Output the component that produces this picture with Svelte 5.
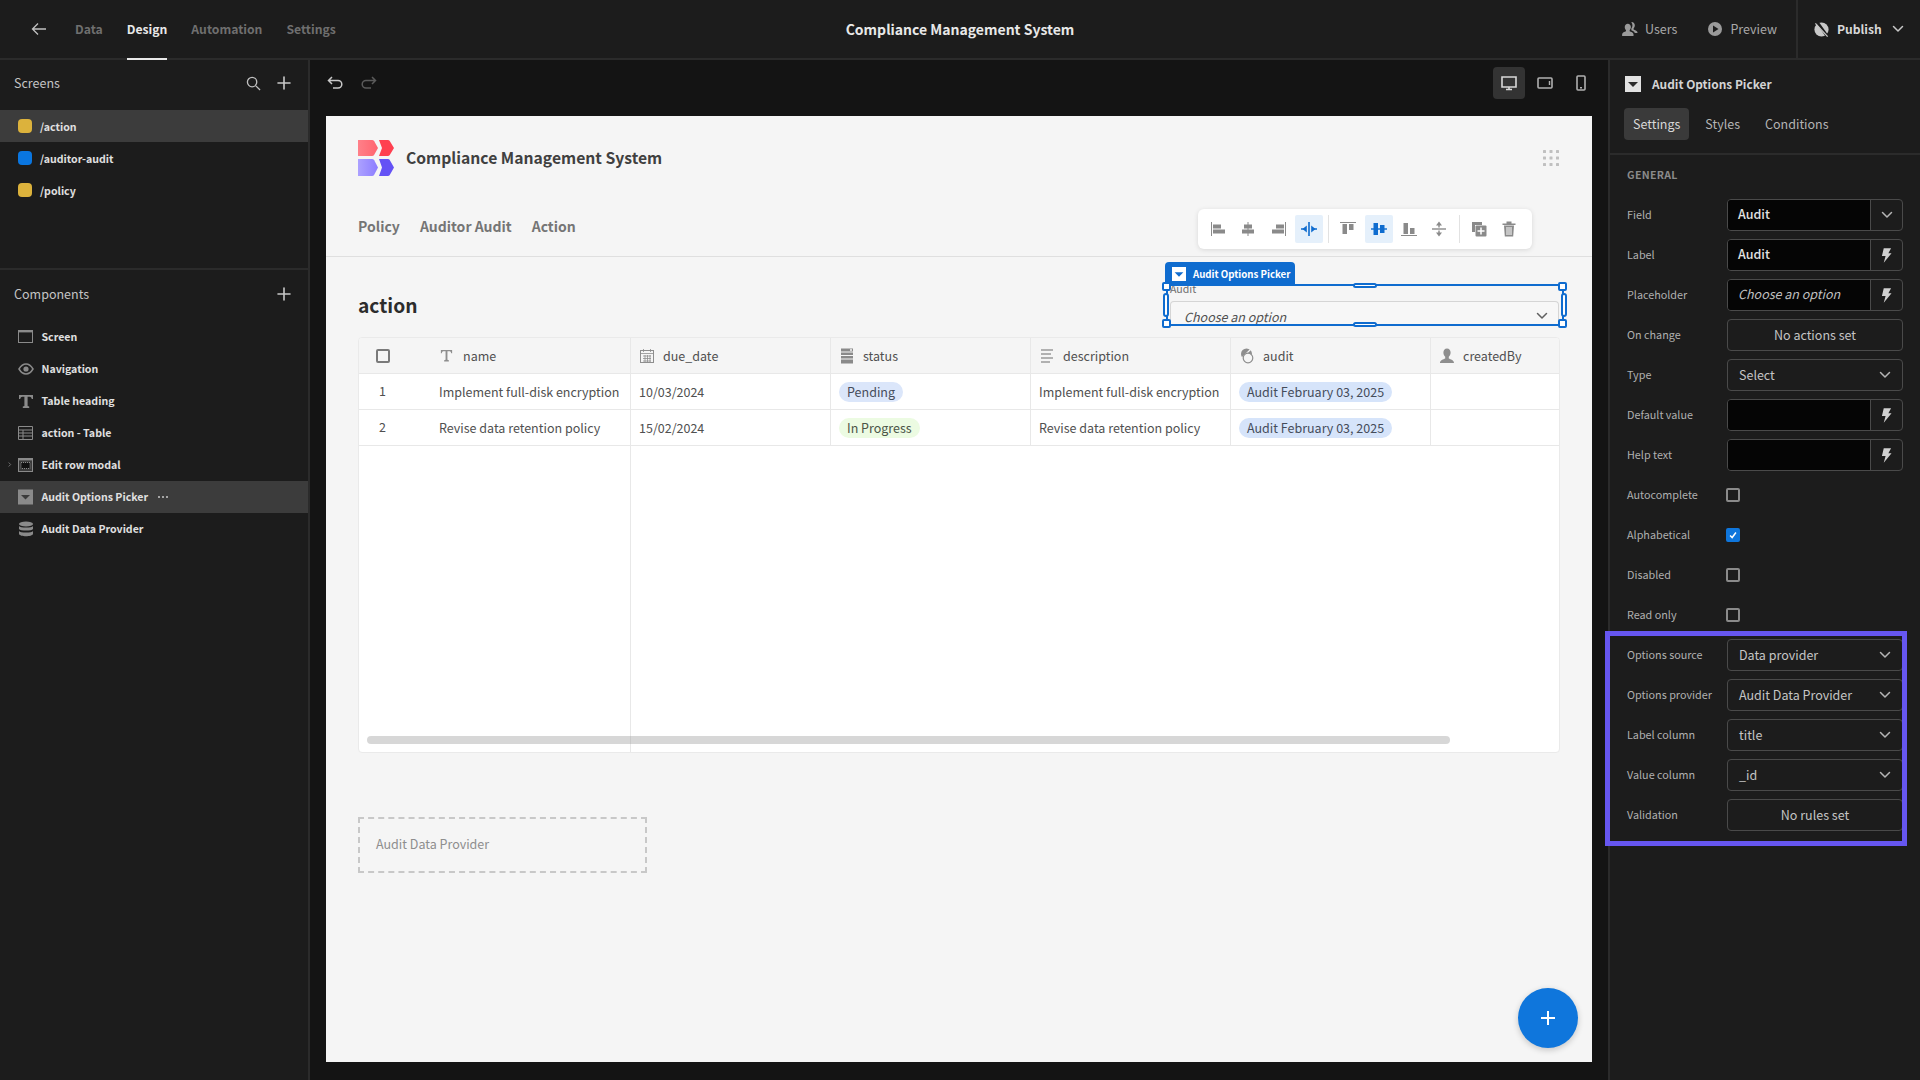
<script>
  const tabs = ['Data', 'Design', 'Automation', 'Settings'];
  const screens = [
    { name: '/action', color: 'yellow', active: true },
    { name: '/auditor-audit', color: 'blue' },
    { name: '/policy', color: 'yellow' }
  ];
  const comps = [
    { name: 'Screen', icon: 'screen' },
    { name: 'Navigation', icon: 'eye' },
    { name: 'Table heading', icon: 'text' },
    { name: 'action - Table', icon: 'table' },
    { name: 'Edit row modal', icon: 'modal', caret: true },
    { name: 'Audit Options Picker', icon: 'picker', active: true },
    { name: 'Audit Data Provider', icon: 'db' }
  ];
  const cols = [
    { name: 'due_date', icon: 'cal' },
    { name: 'status', icon: 'list' },
    { name: 'description', icon: 'lines' },
    { name: 'audit', icon: 'rel' },
    { name: 'createdBy', icon: 'user' }
  ];
  const rows = [
    { n: 1, name: 'Implement full-disk encryption', date: '10/03/2024', status: 'Pending', st: 'pend' },
    { n: 2, name: 'Revise data retention policy', date: '15/02/2024', status: 'In Progress', st: 'prog' }
  ];
  const upper = [
    { l: 'Field', t: 'combo', v: 'Audit', b: 'chev' },
    { l: 'Label', t: 'combo', v: 'Audit', b: 'bolt' },
    { l: 'Placeholder', t: 'combo', v: 'Choose an option', b: 'bolt', it: true },
    { l: 'On change', t: 'btn', v: 'No actions set' },
    { l: 'Type', t: 'sel', v: 'Select' },
    { l: 'Default value', t: 'combo', v: '', b: 'bolt' },
    { l: 'Help text', t: 'combo', v: '', b: 'bolt' },
    { l: 'Autocomplete', t: 'chk' },
    { l: 'Alphabetical', t: 'chk', on: true },
    { l: 'Disabled', t: 'chk' },
    { l: 'Read only', t: 'chk' },
    { l: 'Options source', t: 'sel', v: 'Data provider' },
    { l: 'Options provider', t: 'sel', v: 'Audit Data Provider' },
    { l: 'Label column', t: 'sel', v: 'title' },
    { l: 'Value column', t: 'sel', v: '_id' },
    { l: 'Validation', t: 'btn', v: 'No rules set' }
  ];
</script>

{#snippet chevron(cls)}
  <svg class={cls} viewBox="0 0 12 8" width="12" height="8"><path d="M1.5 1.5 6 6l4.5-4.5" fill="none" stroke="currentColor" stroke-width="1.5" stroke-linecap="round" stroke-linejoin="round"/></svg>
{/snippet}

{#snippet bolt()}
  <svg viewBox="0 0 12 16" width="11" height="15"><path d="M3 0h8L8 5.5h3.5L3 16l2-7.5H1z" fill="#d0d0d0"/></svg>
{/snippet}

{#snippet plus()}
  <svg viewBox="0 0 14 14" width="14" height="14"><path d="M7 1v12M1 7h12" stroke="#c8c8c8" stroke-width="1.6" stroke-linecap="round"/></svg>
{/snippet}

{#snippet pickerIcon(bg, fg)}
  <svg viewBox="0 0 16 16" width="16" height="16"><rect width="16" height="16" fill={bg}/><path d="M3 6h10l-5 5z" fill={fg}/></svg>
{/snippet}

{#snippet compIcon(k)}
  <svg viewBox="0 0 16 16" width="16" height="16" class="ci">
    {#if k === 'screen'}
      <rect x=".5" y="1.5" width="14" height="12" fill="none" stroke="#8a8a8a"/><rect x="0" y="1" width="15" height="2.4" fill="#8a8a8a"/>
    {:else if k === 'eye'}
      <path d="M1 8c2-3.4 4.4-5 7-5s5 1.600 7 5c-2 3.400-4.400 5-7 5s-5-1.600-7-5z" fill="none" stroke="#8a8a8a" stroke-width="1.500"/><circle cx="8" cy="8" r="2.600" fill="#8a8a8a"/>
    {:else if k === 'text'}
      <path d="M1 2h14v4h-1.200c-.4-1.600-1-2.300-2.400-2.300H9.600v9.200l1.600.6V15H4.800v-1.500l1.600-.6V3.700H4.600C3.200 3.700 2.600 4.400 2.200 6H1z" fill="#8a8a8a"/>
    {:else if k === 'table'}
      <path d="M.5 1.500h14v13H.5zM.5 5h14M.5 8h14M.5 11h14M5 5v9.500" fill="none" stroke="#8a8a8a"/>
    {:else if k === 'modal'}
      <rect x=".5" y="1.500" width="14" height="13" fill="#3a3a3a" stroke="#8a8a8a"/><rect x="0" y="1" width="15" height="2.400" fill="#8a8a8a"/><rect x="3" y="5.500" width="9" height="6" fill="#111" stroke="#8a8a8a" stroke-dasharray="1 1"/>
    {:else if k === 'picker'}
      <rect width="15" height="15" y=".5" fill="#8a8a8a"/><path d="M3 6h9l-4.500 4.500z" fill="#3b3b3b"/>
    {:else}
      <ellipse cx="8" cy="3" rx="7" ry="2.600" fill="#8a8a8a"/><path d="M1 5c1 2 13 2 14 0v3c-1 2-13 2-14 0zM1 10c1 2 13 2 14 0v3c-1 3-13 3-14 0z" fill="#8a8a8a"/>
    {/if}
  </svg>
{/snippet}

{#snippet colIcon(k)}
  <svg viewBox="0 0 16 16" width="16" height="16" class="ci">
    {#if k === 'cal'}
      <rect x="1.500" y="2.500" width="13" height="12" fill="none" stroke="#8e8e8e"/><path d="M1.500 5.500h13M4.500 1v3M11.500 1v3M4 8h8M4 10.500h8M4 13h8M6 7v7M8.500 7v7M11 7v7" stroke="#8e8e8e" stroke-width=".8"/>
    {:else if k === 'list'}
      <path d="M2 .5h12v15H2z" fill="#8a8a8a"/><path d="M2 4h12M2 7.500h12M2 11h12" stroke="#f5f5f5" stroke-width="1"/><path d="M11 1.200h2v1.500h-2z" fill="#f5f5f5"/>
    {:else if k === 'lines'}
      <path d="M2 2h12M2 6h10M2 10h12M2 14h9" stroke="#9a9a9a" stroke-width="1.500"/>
    {:else if k === 'rel'}
      <circle cx="7.500" cy="6" r="5.500" fill="#8e8e8e"/><path d="M12 1 3 10" stroke="#f5f5f5" stroke-width="1.200"/><circle cx="9" cy="10" r="4.800" fill="#f5f5f5" stroke="#8e8e8e" stroke-width="1.200"/>
    {:else}
      <path d="M8 .5c2.300 0 3.600 1.700 3.600 4 0 2-.9 3.500-1.800 4.300v1.700c1.800.9 5.200 1.600 5.200 4.500H1c0-2.900 3.400-3.600 5.200-4.500V8.800C5.300 8 4.400 6.500 4.400 4.500c0-2.300 1.300-4 3.600-4z" fill="#8e8e8e"/>
    {/if}
  </svg>
{/snippet}

<div class="app">
  <header class="top">
    <div class="top-left">
      <svg class="back" viewBox="0 0 16 14" width="16" height="14"><path d="M15 7H1.500M7 1.500 1.500 7 7 12.500" fill="none" stroke="#c0c0c0" stroke-width="1.300"/></svg>
      <nav class="tabs">
        {#each tabs as t}
          <span class="tab" class:on={t === 'Design'}>{t}</span>
        {/each}
      </nav>
    </div>
    <div class="app-title">Compliance Management System</div>
    <div class="top-right">
      <span class="act user">
        <svg viewBox="0 0 18 16" width="16" height="14"><path d="M11 0c2 0 3.500 1.500 3.500 3.800 0 1.500-.6 2.700-1.400 3.500v1.200c1.400.7 3.900 1.200 4.400 3v1h-3c-.6-1.600-2.400-2.400-4-3.100v-2c.9-1 1.300-2.300 1.300-3.600 0-1.100-.3-2-.8-2.800C10.400.2 10.700 0 11 0z" fill="#9a9a9a"/><path d="M6.500 2C8.500 2 10 3.500 10 5.800c0 1.500-.6 2.700-1.400 3.500v1.200c1.600.8 4.400 1.400 4.400 3.500v2H0v-2c0-2.100 2.800-2.700 4.400-3.500V9.300C3.600 8.500 3 7.300 3 5.800 3 3.500 4.500 2 6.500 2z" fill="#9a9a9a"/></svg>
        Users
      </span>
      <span class="act prev">
        <svg viewBox="0 0 14 14" width="14" height="14"><circle cx="7" cy="7" r="7" fill="#9a9a9a"/><path d="M5 3.500 10.500 7 5 10.500z" fill="#1c1c1c"/></svg>
        Preview
      </span>
      <div class="pub">
        <svg viewBox="0 0 18 18" width="17" height="17"><circle cx="9" cy="9" r="7.500" fill="#c8c8c8"/><path d="M5 2 15 16" stroke="#1c1c1c" stroke-width="3"/><path d="M2.500 2.500 15.500 16.500" stroke="#c8c8c8" stroke-width="1.400"/></svg>
        <span class="pub-t">Publish</span>
        {@render chevron('pub-c')}
      </div>
    </div>
  </header>

  <div class="main">
    <aside class="left">
      <section class="screens">
        <div class="ph">
          <span>Screens</span>
          <span class="ph-ic">
            <svg viewBox="0 0 16 16" width="15" height="15"><circle cx="6.500" cy="6.500" r="5" fill="none" stroke="#c0c0c0" stroke-width="1.400"/><path d="m10.500 10.500 4.500 4.500" stroke="#c0c0c0" stroke-width="1.400"/></svg>
            {@render plus()}
          </span>
        </div>
        {#each screens as s}
          <div class="item" class:active={s.active}>
            <i class="dot {s.color}"></i><span class="s-name">{s.name}</span>
          </div>
        {/each}
      </section>
      <section class="comps">
        <div class="ph"><span>Components</span><span class="ph-ic">{@render plus()}</span></div>
        {#each comps as c}
          <div class="item c" class:active={c.active}>
            {#if c.caret}<svg class="caret" viewBox="0 0 6 8" width="4" height="7"><path d="m1 1 3 3-3 3" fill="none" stroke="#999"/></svg>{/if}
            {@render compIcon(c.icon)}
            <span>{c.name}</span>
            {#if c.active}<svg class="more" viewBox="0 0 10 2" width="10" height="2" fill="#c8c8c8"><circle cx="1" cy="1" r="1"/><circle cx="5" cy="1" r="1"/><circle cx="9" cy="1" r="1"/></svg>{/if}
          </div>
        {/each}
      </section>
    </aside>

    <main class="canvas">
      <div class="bar">
        <div class="undo">
          <svg viewBox="0 0 16 14" width="16" height="14"><path d="M5 1 1.500 4.500 5 8M1.500 4.500H11a3.800 3.800 0 0 1 0 7.600H6" fill="none" stroke="#c8c8c8" stroke-width="1.500"/></svg>
          <svg viewBox="0 0 16 14" width="16" height="14"><path d="M11 1l3.500 3.500L11 8M14.500 4.500H5a3.800 3.800 0 0 0 0 7.600h5" fill="none" stroke="#5a5a5a" stroke-width="1.500"/></svg>
        </div>
        <div class="devices">
          <span class="dev on"><svg viewBox="0 0 16 16" width="16" height="16"><path d="M1 2h14v10H1z" fill="none" stroke="#d8d8d8" stroke-width="1.600"/><path d="M5 14.500h6M8 12v2.500" stroke="#d8d8d8" stroke-width="1.600"/></svg></span>
          <span class="dev"><svg viewBox="0 0 16 16" width="16" height="16"><rect x="1" y="3" width="14" height="10" rx="1" fill="none" stroke="#b0b0b0" stroke-width="1.600"/><path d="M12.500 6v4" stroke="#b0b0b0" stroke-width="1.400"/></svg></span>
          <span class="dev"><svg viewBox="0 0 16 16" width="16" height="16"><rect x="4" y="1" width="8" height="14" rx="1" fill="none" stroke="#b0b0b0" stroke-width="1.600"/><path d="M7 12.800h2" stroke="#b0b0b0" stroke-width="1.400"/></svg></span>
        </div>
      </div>

      <div class="preview">
        <div class="p-head">
          <div class="brand">
            <svg viewBox="0 0 36 36" width="36" height="36">
              <defs>
                <linearGradient id="ga" x1="0" x2="1"><stop offset="0" stop-color="#ff8089"/><stop offset="1" stop-color="#ff646f"/></linearGradient>
                <linearGradient id="gb" x1="0" x2="1"><stop offset="0" stop-color="#aca1ff"/><stop offset="1" stop-color="#8c7dff"/></linearGradient>
              </defs>
              <path d="M0 0h14q1.500 0 2.200 1.200L20 8l-3.800 6.800q-.7 1.200-2.200 1.200H0z" fill="url(#ga)"/>
              <path d="M21 0h9q1 0 1.600.8L36 8l-4.400 7.200q-.6.8-1.600.8h-9l3-8z" fill="#ff4050"/>
              <path d="M0 19h14q1.500 0 2.200 1.200L20 27.500l-3.800 7.300q-.7 1.200-2.200 1.200H0z" fill="url(#gb)"/>
              <path d="M21 19h9q1 0 1.600.8L36 27.500l-4.400 7.700q-.6.800-1.600.8h-9l3-8.500z" fill="#6452f5"/>
            </svg>
            <span class="brand-t">Compliance Management System</span>
            <svg class="grid-ic" viewBox="0 0 16 16" width="16" height="16" fill="#c0c0c0">
              {#each [1.500, 8, 14.500] as y}{#each [1.500, 8, 14.500] as x}<rect x={x - 1.500} y={y - 1.500} width="3" height="3" rx=".5"/>{/each}{/each}
            </svg>
          </div>
          <nav class="p-nav"><span>Policy</span><span>Auditor Audit</span><span>Action</span></nav>
        </div>

        <div class="p-body">
          <div class="title-row">
            <h1>action</h1>
            <div class="field">
              <div class="floater">
                {#each ['al','ac','ar','as'] as k}
                  <span class="fb" class:picked={k === 'as'}>
                    <svg viewBox="0 0 18 18" width="18" height="18">
                      {#if k === 'al'}<path d="M2.500 2v14" stroke="#8a8a8a"/><path d="M4 4.500h8V8.500H4zM4 9.500h12v4H4z" fill="#8a8a8a"/>
                      {:else if k === 'ac'}<path d="M9 2v14" stroke="#8a8a8a"/><path d="M5 4.500h8V8.500H5zM3 9.500h12v4H3z" fill="#8a8a8a"/>
                      {:else if k === 'ar'}<path d="M15.500 2v14" stroke="#8a8a8a"/><path d="M6 4.500h8V8.500H6zM2 9.500h12v4H2z" fill="#8a8a8a"/>
                      {:else}<path d="M9 2v14" stroke="#0f6ccf" stroke-width="1.600"/><path d="M1 9h5M17 9h-5" stroke="#0f6ccf" stroke-width="1.400"/><path d="M6.800 5.500v7L2.500 9zM11.200 5.500v7L15.500 9z" fill="#0f6ccf"/>{/if}
                    </svg>
                  </span>
                {/each}
                <i class="sep"></i>
                {#each ['vt','vc','vb','vs'] as k}
                  <span class="fb" class:picked={k === 'vc'}>
                    <svg viewBox="0 0 18 18" width="18" height="18">
                      {#if k === 'vt'}<path d="M1 2.500h16" stroke="#8a8a8a"/><path d="M3.500 4H8v10H3.500zM10 4h4.500v6H10z" fill="#8a8a8a"/>
                      {:else if k === 'vc'}<path d="M1 9h16" stroke="#0f6ccf" stroke-width="1.400"/><path d="M3.500 3H8v12H3.500zM10 5h4.500v8H10z" fill="#0f6ccf"/>
                      {:else if k === 'vb'}<path d="M1 15.500h16" stroke="#8a8a8a"/><path d="M3.500 3H8v11H3.500zM10 8h4.500v6H10z" fill="#8a8a8a"/>
                      {:else}<path d="M2 9h14" stroke="#8a8a8a" stroke-width="1.400"/><path d="M9 1.500 6 5.500h6zM9 16.500l-3-4h6z" fill="#8a8a8a"/><path d="M9 5v2.500M9 10.500V13" stroke="#8a8a8a" stroke-width="1.400"/>{/if}
                    </svg>
                  </span>
                {/each}
                <i class="sep"></i>
                <span class="fb"><svg viewBox="0 0 18 18" width="18" height="18"><path d="M2 2h10v3H5v7H2z" fill="#8a8a8a"/><rect x="5.500" y="5.500" width="11" height="11" rx="1" fill="#8a8a8a"/><path d="M11 7.500v7M7.500 11h7" stroke="#fff" stroke-width="1.500"/></svg></span>
                <span class="fb"><svg viewBox="0 0 18 18" width="18" height="18"><path d="M2.500 3.500h13v1.500h-13zM6.500 1.500h5v2h-5zM4 5.500h10l-.8 11H4.800z" fill="#8a8a8a"/><path d="M7 7v8M9 7v8M11 7v8" stroke="#fff"/></svg></span>
              </div>
              <div class="tag">{@render pickerIcon('#fff', '#0f6ccf')}<span>Audit Options Picker</span></div>
              <div class="f-label">Audit</div>
              <div class="f-input"><em>Choose an option</em>{@render chevron('f-c')}</div>
              <div class="sel-box">
                <i class="h c1"></i><i class="h c2"></i><i class="h c3"></i><i class="h c4"></i>
                <i class="h pt"></i><i class="h pb"></i><i class="h pl"></i><i class="h pr"></i>
              </div>
            </div>
          </div>

          <div class="table">
            <div class="tr th">
              <div class="sticky"><span class="idx"><i class="box"></i></span><span class="nm hd"><svg viewBox="0 0 16 16" width="15" height="15"><path d="M2 2h12v3.500h-1c-.3-1.300-.8-2-2-2H9v9l1.500.6V14.500h-5v-1.400L7 12.500v-9H5c-1.200 0-1.700.7-2 2H2z" fill="#8e8e8e"/></svg><span>name</span></span></div>
              {#each cols as c}
                <div class="cell hd">{@render colIcon(c.icon)}<span>{c.name}</span></div>
              {/each}
            </div>
            {#each rows as r}
              <div class="tr">
                <div class="sticky"><span class="idx n">{r.n}</span><span class="nm">{r.name}</span></div>
                <div class="cell">{r.date}</div>
                <div class="cell"><span class="pill {r.st}">{r.status}</span></div>
                <div class="cell">{r.name}</div>
                <div class="cell"><span class="pill aud">Audit February 03, 2025</span></div>
                <div class="cell"></div>
              </div>
            {/each}
            <div class="fill"><div class="fill-l"></div></div>
            <div class="scroll"></div>
          </div>

          <div class="dp">Audit Data Provider</div>
        </div>

        <div class="fab"><svg viewBox="0 0 18 18" width="18" height="18"><path d="M9 2v14M2 9h14" stroke="#fff" stroke-width="2"/></svg></div>
      </div>
    </main>

    <aside class="right">
      <div class="r-head">
        {@render pickerIcon('#e2e2e2', '#2a2a2a')}
        <span>Audit Options Picker</span>
      </div>
      <div class="r-tabs"><span class="on">Settings</span><span>Styles</span><span>Conditions</span></div>
      <div class="r-body">
        <div class="general">GENERAL</div>
        {#each upper as f}
          <div class="row">
            <label>{f.l}</label>
            {#if f.t === 'combo'}
              <div class="combo">
                <div class="ci-v" class:it={f.it}>{f.v}</div>
                <div class="ci-b">{#if f.b === 'bolt'}{@render bolt()}{:else}{@render chevron('c-c')}{/if}</div>
              </div>
            {:else if f.t === 'btn'}
              <div class="rbtn">{f.v}</div>
            {:else if f.t === 'sel'}
              <div class="sel"><span>{f.v}</span>{@render chevron('c-c')}</div>
            {:else}
              <div class="chk-w"><i class="chk" class:on={f.on}>{#if f.on}<svg viewBox="0 0 12 12" width="12" height="12"><path d="m2.500 6.500 2.500 2.500 4.500-6" fill="none" stroke="#fff" stroke-width="1.800"/></svg>{/if}</i></div>
            {/if}
          </div>
        {/each}
        <div class="hl"></div>
      </div>
    </aside>
  </div>
</div>

<style>
  :global(body) { margin: 0; background: #141414; }
  .app { width: 1920px; height: 1080px; overflow: hidden; display: flex; flex-direction: column; background: #141414; color: #d0d0d0; font-family: "Noto Sans CJK SC", "Noto Sans", sans-serif; font-size: 12.5px; line-height: 18px; }
  .top { height: 58px; flex: none; display: flex; align-items: stretch; justify-content: space-between; background: #1c1c1c; border-bottom: 2px solid #2b2b2b; position: relative; }
  .top-left { display: flex; align-items: center; padding-left: 31px; }
  .back { margin-right: 28px; }
  .tabs { display: flex; gap: 24px; align-self: stretch; }
  .tab { display: flex; align-items: center; font-size: 12.2px; font-weight: 600; color: #6f6f6f; height: 58px; box-sizing: border-box; }
  .tab.on { color: #e8e8e8; box-shadow: 0 2px 0 #e8e8e8; }
  .app-title { position: absolute; left: 0; right: 0; top: 0; height: 58px; display: flex; align-items: center; justify-content: center; font-size: 14px; font-weight: 600; color: #e8e8e8; }
  .top-right { display: flex; align-items: center; z-index: 1; }
  .act { display: flex; align-items: center; gap: 8px; color: #a8a8a8; }
  .act.user { margin-right: 31px; gap: 7px; }
  .act.prev { gap: 8px; margin-right: 19px; }
  .pub { display: flex; align-items: center; align-self: stretch; width: 124px; box-sizing: border-box; border-left: 2px solid #2b2b2b; padding-left: 15px; gap: 7px; }
  .pub-t { font-weight: 600; font-size: 12.1px; color: #d8d8d8; }
  .pub :global(.pub-c) { color: #c8c8c8; margin-left: 3px; }

  .main { flex: 1; display: flex; min-height: 0; }
  .left { width: 308px; flex: none; background: #1c1c1c; border-right: 2px solid #2b2b2b; display: flex; flex-direction: column; }
  .screens { height: 210px; flex: none; box-sizing: border-box; border-bottom: 2px solid #2b2b2b; }
  .ph { height: 50px; display: flex; align-items: center; justify-content: space-between; padding: 0 17px 4px 14px; color: #c4c4c4; box-sizing: border-box; }
  .comps .ph { height: 51px; padding-bottom: 4px; }
  .ph-ic { display: flex; align-items: center; gap: 16px; }
  .item { height: 32px; display: flex; align-items: center; padding-left: 18px; gap: 8px; font-size: 10.6px; font-weight: 600; color: #e0e0e0; position: relative; }
  .item.active { background: #3c3c3c; }
  .s-name { padding-top: 1px; }
  .dot { width: 14px; height: 14px; border-radius: 4px; }
  .dot.yellow { background: #dcb23c; }
  .dot.blue { background: #0a76e0; }
  .item.c { padding-left: 18px; gap: 7.5px; }
  .caret { position: absolute; left: 8px; top: 12px; }
  .more { margin-left: 2px; }
  .ci { flex: none; display: block; }

  .canvas { flex: 1; min-width: 0; display: flex; flex-direction: column; padding: 0 16px 18px; }
  .bar { height: 56px; flex: none; display: flex; align-items: center; justify-content: space-between; box-sizing: border-box; padding-bottom: 10px; }
  .undo { display: flex; gap: 18px; padding-left: 1px; }
  .devices { display: flex; align-items: center; gap: 4px; margin-right: -5px; }
  .dev { width: 32px; height: 32px; display: flex; align-items: center; justify-content: center; border-radius: 4px; }
  .dev.on { background: #333; }

  .preview { flex: 1; background: #f5f5f5; position: relative; display: flex; flex-direction: column; }
  .p-head { flex: none; height: 141px; box-sizing: border-box; border-bottom: 1px solid #dfdfdf; padding: 24px 32px 0; }
  .brand { display: flex; align-items: center; height: 36px; gap: 12px; }
  .brand-t { font-size: 15.7px; font-weight: 600; color: #404040; flex: 1; }
  .grid-ic { margin-right: 1px; }
  .p-nav { display: flex; gap: 20px; margin-top: 39px; font-size: 14px; font-weight: 600; color: #757575; line-height: 22px; }
  .p-body { padding: 0 32px; flex: 1; }
  .title-row { display: flex; justify-content: space-between; margin-top: 28px; height: 40px; align-items: center; }
  h1 { margin: 0; font-size: 19.2px; line-height: 40px; font-weight: 600; color: #2c2c2c; }
  .field { width: 400px; height: 40px; margin-right: -5px; position: relative; }
  .floater { position: absolute; top: -76px; right: 33px; width: 334px; height: 40px; box-sizing: border-box; background: #fff; border-radius: 6px; box-shadow: 0 1px 5px rgba(0,0,0,.12); display: flex; align-items: center; padding-left: 6px; gap: 2.300px; }
  .fb { width: 28px; height: 28px; display: flex; align-items: center; justify-content: center; border-radius: 2px; }
  .fb.picked { background: #e5f0fb; }
  .sep { width: 1px; height: 28px; background: #e2e2e2; margin: 0 3px; }
  .tag { position: absolute; left: 0; top: -23px; width: 130px; height: 23px; box-sizing: border-box; background: #0f6ccf; color: #fff; border-radius: 4px 4px 0 0; display: flex; align-items: center; gap: 7px; padding-left: 7px; font-size: 9.7px; font-weight: 600; white-space: nowrap; }
  .tag :global(svg) { width: 14px; height: 14px; flex: none; }
  .f-label { position: absolute; left: 5px; top: -3px; font-size: 10.6px; line-height: 14px; color: #6f6f6f; }
  .f-input { position: absolute; left: 5px; right: 6px; top: 16px; height: 24px; overflow: hidden; box-sizing: border-box; border: 1px solid #d5d5d5; border-bottom: 0; border-radius: 4px 4px 0 0; background: #f7f7f7; padding: 6px 10px 0 13px; display: flex; justify-content: space-between; color: #505050; }
  .f-input em { line-height: 18px; }
  .f-input :global(.f-c) { color: #606060; margin-top: 4px; }
  .sel-box { position: absolute; left: 1px; right: 1px; top: -1px; bottom: -1px; box-sizing: border-box; border: 2px solid #0f6ccf; }
  .h { position: absolute; box-sizing: border-box; border: 2px solid #0f6ccf; background: #fff; }
  .c1, .c2, .c3, .c4 { width: 9px; height: 9px; border-radius: 2px; }
  .c1 { left: -6px; top: -4px; } .c2 { right: -5px; top: -4px; } .c3 { left: -6px; bottom: -4px; } .c4 { right: -5px; bottom: -4px; }
  .pt, .pb { width: 24px; height: 5px; left: 185px; border-radius: 3px; }
  .pt { top: -3px; } .pb { bottom: -3px; }
  .pl, .pr { width: 6px; height: 24px; top: 7px; border-radius: 3px; }
  .pl { left: -5px; } .pr { right: -5px; }

  .table { margin-top: 12px; height: 416px; box-sizing: border-box; border: 1px solid #eaeaea; border-radius: 4px; background: #fff; overflow: hidden; position: relative; display: flex; flex-direction: column; color: #505050; }
  .tr { display: flex; height: 36px; flex: none; box-sizing: border-box; border-bottom: 1px solid #e8e8e8; width: 1272px; }
  .th { background: #f5f5f5; }
  .sticky { width: 272px; flex: none; display: flex; align-items: center; box-sizing: border-box; border-right: 1px solid #e8e8e8; }
  .idx { width: 80px; flex: none; padding-left: 17px; box-sizing: border-box; display: block; }
  .idx.n { padding-left: 20px; margin-top: -2px; }
  .box { display: block; width: 14px; height: 14px; box-sizing: border-box; border: 2px solid #7a7a7a; border-radius: 2px; }
  .nm { white-space: nowrap; }
  .hd { display: flex; align-items: center; gap: 10px; }
  .nm.hd { gap: 9px; }
  .cell { width: 200px; flex: none; box-sizing: border-box; border-right: 1px solid #e8e8e8; padding-left: 8px; display: flex; align-items: center; white-space: nowrap; }
  .cell.hd { gap: 8px; }
  .pill { height: 20px; line-height: 20px; padding: 0 8px; border-radius: 10px; color: #454c5a; }
  .pend { background: #dbe6fa; }
  .prog { background: #ecfbe2; color: #4b5547; }
  .aud { background: #d6e4fa; }
  .fill { flex: 1; display: flex; }
  .fill-l { width: 272px; box-sizing: border-box; border-right: 1px solid #e8e8e8; }
  .scroll { position: absolute; left: 8px; bottom: 8px; width: 1083px; height: 8px; background: rgba(150,150,150,.38); border-radius: 4px; }
  .dp { margin-top: 64px; width: 289px; height: 56px; box-sizing: border-box; border: 2px dashed #c8c8c8; display: flex; align-items: center; padding: 0 0 2px 16px; color: #8e8e8e; }
  .fab { position: absolute; right: 14px; bottom: 14px; width: 60px; height: 60px; border-radius: 50%; background: #0f76dc; box-shadow: 0 2px 6px rgba(0,0,0,.2); display: flex; align-items: center; justify-content: center; }

  .right { width: 312px; flex: none; box-sizing: border-box; background: #1c1c1c; border-left: 2px solid #2b2b2b; display: flex; flex-direction: column; }
  .r-head { height: 48px; display: flex; align-items: center; padding: 0 0 0 15px; gap: 11px; color: #d4d4d4; font-size: 11.9px; font-weight: 600; box-sizing: border-box; }
  .r-tabs { height: 47px; box-sizing: border-box; display: flex; padding: 0 0 0 14px; border-bottom: 2px solid #2b2b2b; color: #b4b4b4; }
  .r-tabs span { height: 32px; display: flex; align-items: center; padding: 0 9px; border-radius: 4px; margin-right: 7px; }
  .r-tabs .on { background: #3a3a3a; color: #d8d8d8; }
  .r-body { position: relative; padding: 0 0 0 17px; }
  .general { height: 44px; display: flex; align-items: center; font-size: 10.6px; font-weight: 600; color: #8a8a8a; letter-spacing: .3px; box-sizing: border-box; padding-bottom: 4px; }
  .row { display: flex; align-items: center; height: 32px; margin-bottom: 8px; }
  label { width: 100px; flex: none; font-size: 10.8px; color: #b0b0b0; position: relative; top: -1px; }
  .combo, .sel, .rbtn { width: 176px; height: 32px; flex: none; box-sizing: border-box; border: 1px solid #4a4a4a; border-radius: 4px; }
  .combo { display: flex; overflow: hidden; }
  .ci-v { flex: 1; background: #050505; padding-left: 10px; line-height: 28px; color: #e2e2e2; font-weight: 500; }
  .ci-v.it { font-style: italic; font-weight: 400; color: #c0c0c0; }
  .ci-b { width: 31px; flex: none; border-left: 1px solid #4a4a4a; display: flex; align-items: center; justify-content: center; }
  :global(.c-c) { color: #b4b4b4; }
  .sel { display: flex; align-items: center; justify-content: space-between; padding: 0 11px 0 11px; color: #c4c4c4; }
  .rbtn { display: flex; align-items: center; justify-content: center; color: #c4c4c4; }
  .chk-w { width: 176px; display: flex; }
  .chk { width: 14px; height: 14px; box-sizing: border-box; border: 2px solid #8a8a8a; border-radius: 2px; display: flex; align-items: center; justify-content: center; margin-left: -1px; }
  .chk.on { background: #0f76dc; border-color: #0f76dc; }
  .hl { position: absolute; left: -5px; top: 476px; width: 302px; height: 215px; box-sizing: border-box; border: 5px solid #6656f0; pointer-events: none; }
</style>
